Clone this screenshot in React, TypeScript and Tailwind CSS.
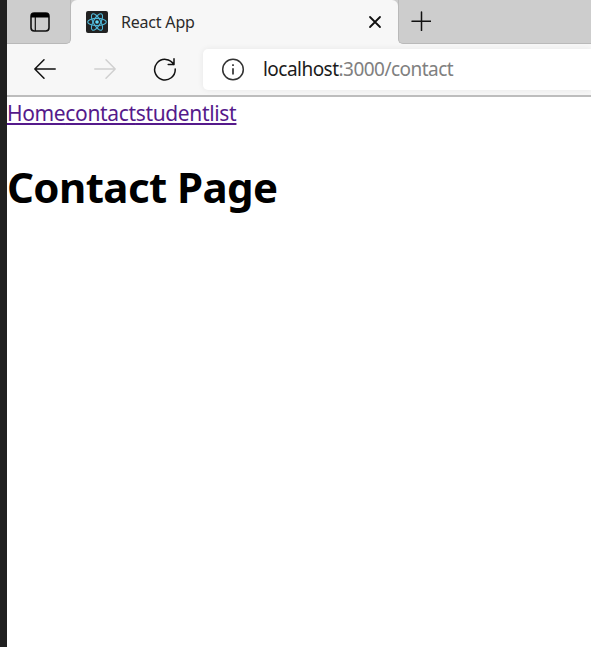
import React from "react";

function PanelIcon() {
  return (
    <svg width="20" height="20" viewBox="0 0 20 20" fill="none" stroke="#111" className="block">
      <rect x="1" y="1" width="18" height="18" rx="3.2" strokeWidth="1.6" />
      <path d="M1 5.5V4a3 3 0 0 1 3-3h12a3 3 0 0 1 3 3v1.5z" fill="#000" stroke="none" />
      <path d="M5.3 5v14" strokeWidth="1.2" />
    </svg>
  );
}

function ReactLogo() {
  return (
    <svg width="22" height="22" viewBox="0 0 22 22" className="block">
      <rect width="22" height="22" rx="2" fill="#222" />
      <g fill="none" stroke="#4fb6d6" strokeWidth="1.1">
        <ellipse cx="11" cy="11" rx="9.3" ry="3.6" />
        <ellipse cx="11" cy="11" rx="9.3" ry="3.6" transform="rotate(60 11 11)" />
        <ellipse cx="11" cy="11" rx="9.3" ry="3.6" transform="rotate(120 11 11)" />
      </g>
      <circle cx="11" cy="11" r="1.8" fill="#61dafb" />
    </svg>
  );
}

function ArrowLeft({ className }: { className: string }) {
  return (
    <svg width="24" height="22" viewBox="0 0 24 22" fill="none" stroke="currentColor" strokeWidth="1.5" strokeLinecap="round" strokeLinejoin="round" className={className}>
      <path d="M22.2 11H1.8M11 1.8 1.8 11l9.2 9.2" />
    </svg>
  );
}

function TabStrip() {
  return (
    <div className="flex h-11 bg-[#cdcdcd]">
      <div className="flex w-16 shrink-0 bg-[#f7f7f7]">
        <div className="h-[43.5px] w-16 rounded-br-[5px] border-r border-b border-[#b9b9b9] bg-[#cdcdcd] pt-3 pl-[22.5px]">
          <PanelIcon />
        </div>
      </div>
      <div className="flex w-[327px] shrink-0 rounded-t-[6px] bg-[#f7f7f7] pt-[11px] pl-[15px]">
        <ReactLogo />
        <div className="ml-[13px] w-[240px] whitespace-nowrap font-['Noto_Sans',sans-serif] text-[16px] leading-[22px] tracking-[-0.2px] text-[#2b2b2b]">React App</div>
        <svg width="14" height="14" viewBox="0 0 14 14" fill="none" stroke="#111" strokeWidth="1.8" strokeLinecap="round" className="mt-1 ml-[7px] block">
          <path d="m2 2 10 10M12 2 2 12" />
        </svg>
      </div>
      <div className="flex flex-1 bg-[#f7f7f7]">
        <div className="h-[43.5px] flex-1 rounded-bl-[5px] border-b border-l border-[#b9b9b9] bg-[#cdcdcd] pt-[11px] pl-[12px]">
          <svg width="20" height="20" viewBox="0 0 20 20" fill="none" stroke="#111" strokeWidth="1.5" strokeLinecap="round" className="block">
            <path d="M10.5 1v18.5M1 10.3h18.7" />
          </svg>
        </div>
      </div>
    </div>
  );
}

function Toolbar() {
  return (
    <div className="flex h-[53px] border-b-2 border-[#bdbdbd] bg-[#f7f7f7] pl-[26px]">
      <ArrowLeft className="mt-[14px] block text-[#111]" />
      <ArrowLeft className="mt-[14px] ml-[36px] block rotate-180 text-[#d0d0d0]" />
      <svg width="24" height="24" viewBox="0 0 24 24" fill="none" stroke="#111" strokeWidth="1.5" strokeLinecap="round" strokeLinejoin="round" className="mt-[13px] ml-[36px] block">
        <path d="M20.9 7.6A10.3 10.3 0 1 0 22.2 12M21 1.8v5.8h-5.8" />
      </svg>
      <div className="mt-[5px] ml-[26px] flex h-[41px] flex-1 rounded-l-[5px] bg-white pt-[9px] pl-[18px] shadow-[0_0_6px_rgba(0,0,0,0.07)]">
        <svg width="24" height="24" viewBox="0 0 24 24" fill="none" stroke="#333" strokeWidth="1.5" className="block">
          <circle cx="12" cy="11.5" r="10.3" />
          <path d="M12 10.2v6.2M12 6.3v1.8" strokeWidth="1.7" />
        </svg>
        <div className="ml-[18px] whitespace-nowrap font-['Noto_Sans',sans-serif] text-[19px] leading-[23px] tracking-[-0.53px] text-[#808080]">
          <span className="text-[#1b1b1b]">localhost</span>:3000/contact
        </div>
      </div>
    </div>
  );
}

export default function App() {
  return (
    <div className="flex h-[647px] w-[591px] overflow-hidden bg-white">
      <div className="w-[7px] shrink-0 bg-[#202020]" />
      <div className="flex min-w-0 flex-1 flex-col">
        <TabStrip />
        <Toolbar />
        <main className="flex-1 bg-white font-['Noto_Sans',sans-serif]">
          <nav className="flex h-8 text-[21px] leading-8 tracking-[-0.35px] whitespace-nowrap text-[#551a8b] underline decoration-[1.5px] underline-offset-[2px]">
            <a>Home</a>
            <a>contact</a>
            <a>studentlist</a>
          </nav>
          <h1 className="mt-[29px] text-[42px] leading-[58px] font-bold tracking-[-0.6px] whitespace-nowrap text-black">Contact Page</h1>
        </main>
      </div>
    </div>
  );
}
